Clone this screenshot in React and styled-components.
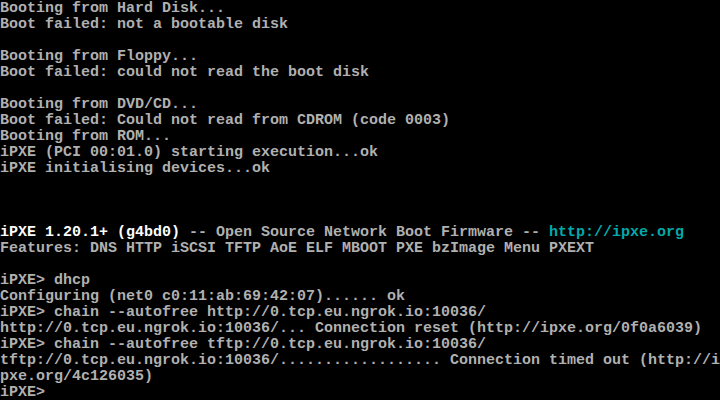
import styled, { createGlobalStyle } from "styled-components";

const Global = createGlobalStyle`
  html, body {
    margin: 0;
    padding: 0;
    background: #000;
  }
`;

const Screen = styled.div`
  width: 720px;
  height: 400px;
  box-sizing: border-box;
  padding-top: 1px;
  background: #000;
  overflow: hidden;
  display: flex;
  flex-direction: column;
  font-family: "Liberation Mono", "DejaVu Sans Mono", monospace;
  font-size: 15px;
  font-weight: bold;
  color: #b0b0b0;
`;

const Row = styled.div`
  flex: none;
  height: 16px;
  line-height: 16px;
  white-space: pre;
`;

const Bright = styled.span`
  color: #fcfcfc;
`;

const Link = styled.span`
  color: #00aaaa;
`;

const lines = [
  "Booting from Hard Disk...",
  "Boot failed: not a bootable disk",
  "",
  "Booting from Floppy...",
  "Boot failed: could not read the boot disk",
  "",
  "Booting from DVD/CD...",
  "Boot failed: Could not read from CDROM (code 0003)",
  "Booting from ROM...",
  "iPXE (PCI 00:01.0) starting execution...ok",
  "iPXE initialising devices...ok",
  "",
  "",
  "",
  null,
  "Features: DNS HTTP iSCSI TFTP AoE ELF MBOOT PXE bzImage Menu PXEXT",
  "",
  "iPXE> dhcp",
  "Configuring (net0 c0:11:ab:69:42:07)...... ok",
  "iPXE> chain --autofree http://0.tcp.eu.ngrok.io:10036/",
  "http://0.tcp.eu.ngrok.io:10036/... Connection reset (http://ipxe.org/0f0a6039)",
  "iPXE> chain --autofree tftp://0.tcp.eu.ngrok.io:10036/",
  "tftp://0.tcp.eu.ngrok.io:10036/.................. Connection timed out (http://i",
  "pxe.org/4c126035)",
  "iPXE>",
];

export default function App() {
  return (
    <>
      <Global />
      <Screen>
        {lines.map((text, i) =>
          text === null ? (
            <Row key={i}>
              <Bright>iPXE 1.20.1+ (g4bd0)</Bright>
              {" -- Open Source Network Boot Firmware -- "}
              <Link>http://ipxe.org</Link>
            </Row>
          ) : (
            <Row key={i}>{text}</Row>
          )
        )}
      </Screen>
    </>
  );
}
